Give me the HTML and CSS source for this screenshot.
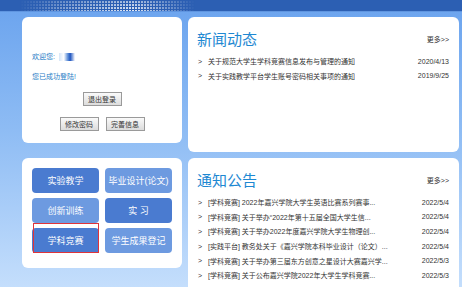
FILE: index.html
```html
<!DOCTYPE html>
<html lang="zh-CN">

<head>
    <meta charset="UTF-8">
    <title>实践教学平台</title>
    <link rel="stylesheet" href="styles.css">
</head>

<body>
    <div class="top-bar">
        <div class="top-grid"></div>
    </div>

    <div class="main">
        <div class="side">
            <div class="panel user-box">
                <p class="user-line">欢迎您: <span class="user-name"></span></p>
                <p class="user-line">您已成功登陆!</p>
                <div class="btn-row">
                    <button class="gray-btn">退出登录</button>
                </div>
                <div class="btn-row">
                    <button class="gray-btn">修改密码</button>
                    <button class="gray-btn">完善信息</button>
                </div>
            </div>

            <div class="panel menu-box">
                <a class="menu-btn dark">实验教学</a>
                <a class="menu-btn light">毕业设计(论文)</a>
                <a class="menu-btn light">创新训练</a>
                <a class="menu-btn dark">实 习</a>
                <a class="menu-btn dark active">学科竞赛</a>
                <a class="menu-btn light">学生成果登记</a>
            </div>
        </div>

        <div class="content">
            <div class="panel news-box">
                <div class="box-head">
                    <h2>新闻动态</h2>
                    <a class="more">更多&gt;&gt;</a>
                </div>
                <ul class="list">
                    <li><span class="arrow">&gt;</span><span class="title">关于规范大学生学科竞赛信息发布与管理的通知</span><span class="date">2020/4/13</span></li>
                    <li><span class="arrow">&gt;</span><span class="title">关于实践教学平台学生账号密码相关事项的通知</span><span class="date">2019/9/25</span></li>
                </ul>
            </div>

            <div class="panel notice-box">
                <div class="box-head">
                    <h2>通知公告</h2>
                    <a class="more">更多&gt;&gt;</a>
                </div>
                <ul class="list">
                    <li><span class="arrow">&gt;</span><span class="title">[学科竞赛] 2022年嘉兴学院大学生英语比赛系列赛事...</span><span class="date">2022/5/4</span></li>
                    <li><span class="arrow">&gt;</span><span class="title">[学科竞赛] 关于举办“2022年第十五届全国大学生信...</span><span class="date">2022/5/4</span></li>
                    <li><span class="arrow">&gt;</span><span class="title">[学科竞赛] 关于举办2022年度嘉兴学院大学生物理创...</span><span class="date">2022/5/4</span></li>
                    <li><span class="arrow">&gt;</span><span class="title">[实践平台] 教务处关于《嘉兴学院本科毕业设计（论文）...</span><span class="date">2022/5/4</span></li>
                    <li><span class="arrow">&gt;</span><span class="title">[学科竞赛] 关于举办第三届东方创意之星设计大赛嘉兴学...</span><span class="date">2022/5/3</span></li>
                    <li><span class="arrow">&gt;</span><span class="title">[学科竞赛] 关于公布嘉兴学院2022年大学生学科竞赛...</span><span class="date">2022/5/3</span></li>
                </ul>
            </div>
        </div>
    </div>
</body>

</html>
```

FILE: styles.css
```css
html,
body {
    height: 287px;
    overflow: hidden;
}

body {
    margin: 0;
    font-family: "Liberation Sans", "Noto Sans CJK SC", sans-serif;
    background: linear-gradient(to bottom, #6aa3ee 0, #8ebcf4 130px, #c4defc 287px);
}

/* top strip */
.top-bar {
    height: 11px;
    background-color: #2c5fb3;
    border-bottom: 1px solid #5f95e0;
}

.top-grid {
    width: 175px;
    height: 11px;
    margin-left: 20px;
    background-image:
        linear-gradient(90deg, #2c5fb3 1px, transparent 1px),
        linear-gradient(#2c5fb3 1px, transparent 1px),
        linear-gradient(rgba(255, 255, 255, 0.55), rgba(255, 255, 255, 0.9));
    background-size: 3px 3px, 3px 3px, 100% 100%;
    -webkit-mask-image: linear-gradient(to right, transparent 0, rgba(0, 0, 0, 0.5) 25%, #000 65%, transparent 100%);
    mask-image: linear-gradient(to right, transparent 0, rgba(0, 0, 0, 0.5) 25%, #000 65%, transparent 100%);
}

.main {
    display: flex;
    gap: 6px;
    padding: 5px 3px 0 22px;
}

.panel {
    background-color: #ffffff;
    border-radius: 6px;
}

.side {
    width: 160px;
    display: flex;
    flex-direction: column;
    gap: 15px;
}

.content {
    flex: 1;
    display: flex;
    flex-direction: column;
    gap: 6px;
}

/* user box */
.user-box {
    height: 126px;
    box-sizing: border-box;
    padding: 34px 0 0 10px;
}

.user-line {
    margin: 0 0 8px;
    line-height: 12px;
    font-size: 7px;
    color: #1f7dc6;
}

.user-name {
    display: inline-block;
    width: 16px;
    height: 8px;
    margin-left: 2px;
    vertical-align: middle;
    background: linear-gradient(90deg, #d6e6f8 0, #ffffff 30%, #5f8fd8 55%, #1f55c0 70%, #ffffff 100%);
}

.btn-row {
    display: flex;
    justify-content: center;
    gap: 7px;
    margin: 9px 10px 0 0;
}

.btn-row + .btn-row {
    margin-top: 11px;
}

.gray-btn {
    width: 39px;
    height: 14px;
    padding: 0;
    font-family: inherit;
    font-size: 7px;
    color: #333;
    border: 1px solid #9a9a9a;
    background: linear-gradient(#fafafa, #dcdcdc);
}

/* menu box */
.menu-box {
    height: 110px;
    box-sizing: border-box;
    padding: 10px 10px 0;
    display: grid;
    grid-template-columns: 67px 67px;
    grid-auto-rows: 25px;
    column-gap: 6px;
    row-gap: 5px;
}

.menu-btn {
    position: relative;
    display: flex;
    align-items: center;
    justify-content: center;
    border-radius: 4px;
    font-size: 9px;
    color: #ffffff;
}

.menu-btn.dark {
    background-color: #4a7bd0;
}

.menu-btn.light {
    background-color: #6d9ae0;
}

.menu-btn.active::after {
    content: "";
    position: absolute;
    top: -5px;
    left: 1px;
    right: 0;
    bottom: 0;
    border: 1px solid #e0343a;
}

/* news and notices */
.news-box {
    height: 135px;
    box-sizing: border-box;
    padding: 11px 10px 0 9px;
}

.notice-box {
    height: 140px;
    box-sizing: border-box;
    padding: 11px 10px 0 9px;
}

.box-head {
    display: flex;
    align-items: center;
    justify-content: space-between;
    height: 20px;
    margin-bottom: 6px;
}

.box-head h2 {
    margin: 0;
    font-size: 15px;
    font-weight: normal;
    color: #1e88d2;
}

.more {
    font-size: 7px;
    color: #333;
    margin-top: 2px;
}

.list {
    list-style: none;
    margin: 0;
    padding: 0;
}

.list li {
    display: flex;
    align-items: center;
    height: 14.6px;
    font-size: 7px;
    color: #333;
}

.arrow {
    width: 10px;
    padding-left: 1px;
}

.title {
    flex: 1;
    white-space: nowrap;
}

.date {
    text-align: right;
}
```
